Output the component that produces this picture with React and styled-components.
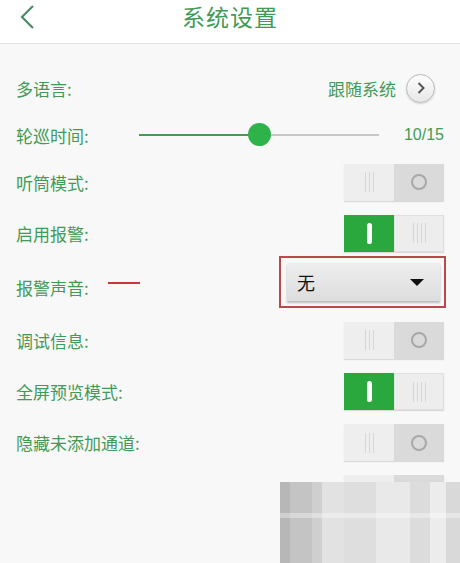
import React from 'react';
import styled, {createGlobalStyle} from 'styled-components';

const GREEN = '#3f9b56';
const FONT = '"Noto Sans CJK SC", "Noto Sans", sans-serif';

const GlobalStyle = createGlobalStyle`
    html, body {
        margin: 0;
        padding: 0;
        background: #f8f8f8;
        font-family: ${FONT};
    }
`;

const Page = styled.div`
    position: relative;
    width: 460px;
    height: 563px;
    overflow: hidden;
    background: #f8f8f8;
`;

const Header = styled.div`
    height: 43px;
    background: #fff;
    border-bottom: 1px solid #e2e2e2;
    display: flex;
    align-items: flex-start;
    justify-content: center;
    position: relative;
`;

const Back = styled.svg`
    position: absolute;
    left: 18px;
    top: 4px;
`;

const Title = styled.div`
    color: ${GREEN};
    font-size: 23px;
    line-height: 28px;
    padding-top: 2px;
    letter-spacing: 1px;
`;

const List = styled.div`
    padding: 20px 16px 0 16px;
    display: flex;
    flex-direction: column;
`;

const Row = styled.div`
    height: ${p => p.h}px;
    display: flex;
    align-items: center;
    justify-content: space-between;
    position: relative;
`;

const Label = styled.div`
    color: ${GREEN};
    font-size: 17px;
    white-space: nowrap;
`;

const Right = styled.div`
    display: flex;
    align-items: center;
    gap: 10px;
    color: ${GREEN};
    font-size: 17px;
`;

const RoundBtn = styled.div`
    width: 27px;
    height: 27px;
    border-radius: 50%;
    border: 1px solid #b8b8b8;
    background: linear-gradient(#fdfdfd, #e8e8e8);
    box-shadow: 0 1px 2px rgba(0, 0, 0, 0.15);
    display: flex;
    align-items: center;
    justify-content: center;
    margin-right: 9px;
`;

const Slider = styled.div`
    position: relative;
    width: 240px;
    height: 2px;
    margin-left: 50px;
    background: linear-gradient(to right, #4a9a55 0 ${p => p.pct}%, #c6c6c6 ${p => p.pct}% 100%);
`;

const Thumb = styled.div`
    position: absolute;
    top: -11px;
    width: 23px;
    height: 23px;
    margin-left: -11px;
    border-radius: 50%;
    background: #2db34a;
`;

const Value = styled.div`
    margin-left: auto;
    color: ${GREEN};
    font-size: 16px;
    font-family: "Liberation Sans", sans-serif;
`;

const Toggle = styled.div`
    width: 100px;
    height: 37px;
    display: flex;
    box-shadow: 0 1px 1px rgba(0, 0, 0, 0.12);
`;

const Half = styled.div`
    flex: 1;
    display: flex;
    align-items: center;
    justify-content: center;
    gap: 3px;
    background: ${p => p.bg};
    border: 1px solid ${p => p.line || 'transparent'};
`;

const Grip = styled.span`
    width: 1px;
    height: 20px;
    background: #d6d6d6;
`;

const OnBar = styled.span`
    width: 5px;
    height: 21px;
    border-radius: 3px;
    background: #fff;
`;

const Ring = styled.span`
    width: 12px;
    height: 12px;
    border-radius: 50%;
    border: 2px solid #a8a8a8;
`;

const Switch = ({on}) =>
    on ? (
        <Toggle>
            <Half bg="#2aa83d"><OnBar/></Half>
            <Half bg="#ededed" line="#e0e0e0">
                <Grip/><Grip/><Grip/><Grip/>
            </Half>
        </Toggle>
    ) : (
        <Toggle>
            <Half bg="#eeeeee"><Grip/><Grip/><Grip/></Half>
            <Half bg="#dadada"><Ring/></Half>
        </Toggle>
    );

const Marker = styled.div`
    position: absolute;
    left: 92px;
    top: 22px;
    width: 32px;
    height: 2px;
    background: #c8353a;
`;

const RedBox = styled.div`
    width: 167px;
    height: 52px;
    border: 2px solid #b94a4c;
    margin-right: -2px;
    margin-bottom: 10px;
    padding: 5px 4px 5px 6px;
    box-sizing: border-box;
    display: flex;
`;

const Select = styled.div`
    flex: 1;
    display: flex;
    align-items: center;
    justify-content: space-between;
    padding: 0 16px 0 10px;
    background: linear-gradient(#eeeeee, #dddddd);
    box-shadow: 0 2px 2px rgba(0, 0, 0, 0.25);
    color: #111;
    font-size: 18px;
`;

const Caret = styled.span`
    width: 0;
    height: 0;
    border-left: 7px solid transparent;
    border-right: 7px solid transparent;
    border-top: 7px solid #111;
`;

const Mosaic = styled.div`
    position: absolute;
    left: 280px;
    top: 482px;
    width: 180px;
    height: 81px;
    background:
        linear-gradient(to bottom, rgba(255,255,255,0) 0 38%, rgba(255,255,255,0.35) 38% 44%, rgba(255,255,255,0) 44% 100%),
        linear-gradient(to right,
            #b7b7b7 0 10px, #c4c4c4 10px 32px, #cfcfcf 32px 42px, #e2e2e2 42px 64px,
            #dedede 64px 96px, #e9e9e9 96px 130px, #dcdcdc 130px 150px, #ececec 150px 166px, #d9d9d9 166px 180px);
`;

const rows = [48, 46, 48, 54, 54, 52, 51, 51, 51];

export default function App() {
    return (
        <Page>
            <GlobalStyle/>
            <Header>
                <Back width="18" height="26" viewBox="0 0 18 26">
                    <path d="M15 2 L4 13 L15 24" fill="none" stroke="#4f8a66" strokeWidth="2.2"/>
                </Back>
                <Title>系统设置</Title>
            </Header>
            <List>
                <Row h={rows[0]}>
                    <Label>多语言:</Label>
                    <Right>
                        跟随系统
                        <RoundBtn>
                            <svg width="12" height="14" viewBox="0 0 12 14">
                                <path d="M3.5 2 L8.5 7 L3.5 12" fill="none" stroke="#555" strokeWidth="2"/>
                            </svg>
                        </RoundBtn>
                    </Right>
                </Row>
                <Row h={rows[1]}>
                    <Label>轮巡时间:</Label>
                    <Slider pct={50}>
                        <Thumb style={{left: '50%'}}/>
                    </Slider>
                    <Value>10/15</Value>
                </Row>
                <Row h={rows[2]}>
                    <Label>听筒模式:</Label>
                    <Switch/>
                </Row>
                <Row h={rows[3]}>
                    <Label>启用报警:</Label>
                    <Switch on/>
                </Row>
                <Row h={rows[4]}>
                    <Label>报警声音:</Label>
                    <Marker/>
                    <RedBox>
                        <Select>无<Caret/></Select>
                    </RedBox>
                </Row>
                <Row h={rows[5]}>
                    <Label>调试信息:</Label>
                    <Switch/>
                </Row>
                <Row h={rows[6]}>
                    <Label>全屏预览模式:</Label>
                    <Switch on/>
                </Row>
                <Row h={rows[7]}>
                    <Label>隐藏未添加通道:</Label>
                    <Switch/>
                </Row>
                <Row h={rows[8]}>
                    <Label/>
                    <Switch/>
                </Row>
            </List>
            <Mosaic/>
        </Page>
    );
}
